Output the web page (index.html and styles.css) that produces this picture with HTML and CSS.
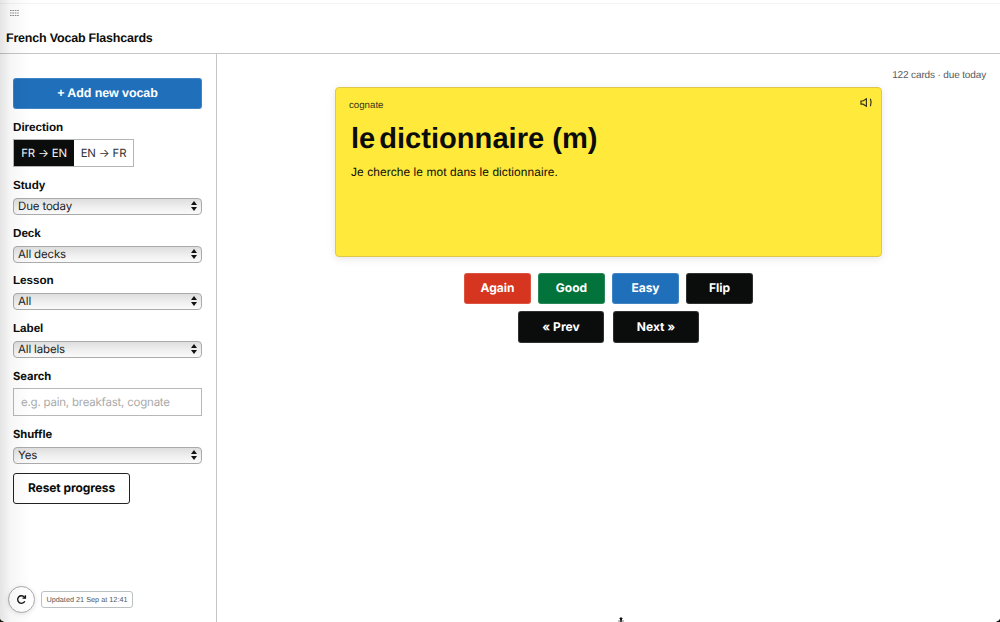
FILE: index.html
```html
<!DOCTYPE html>
<html lang="en">
<head>
<meta charset="utf-8">
<title>French Vocab Flashcards</title>
<link rel="stylesheet" href="styles.css">
</head>
<body>
<div class="app">
  <header class="header">
    <svg class="grip" width="9" height="7" viewBox="0 0 9 7" stroke="#8a8a8a" stroke-width="1" stroke-dasharray="1.6 .8"><path d="M0 .5h9M0 3h9M0 5.5h9"/></svg>
    <h1 class="title">French Vocab Flashcards</h1>
  </header>
  <div class="body">
    <aside class="sidebar">
      <button class="btn add">+ Add new vocab</button>
      <div class="field near">
        <span class="label">Direction</span>
        <div class="toggle"><button class="side on">FR → EN</button><button class="side">EN → FR</button></div>
      </div>
      <div class="field"><span class="label">Study</span><div class="select"><span>Due today</span><svg class="arrows" viewBox="0 0 6 10"><path d="M3 0l3 4H0zM3 10L0 6h6z"/></svg></div></div>
      <div class="field"><span class="label">Deck</span><div class="select"><span>All decks</span><svg class="arrows" viewBox="0 0 6 10"><path d="M3 0l3 4H0zM3 10L0 6h6z"/></svg></div></div>
      <div class="field"><span class="label">Lesson</span><div class="select"><span>All</span><svg class="arrows" viewBox="0 0 6 10"><path d="M3 0l3 4H0zM3 10L0 6h6z"/></svg></div></div>
      <div class="field"><span class="label">Label</span><div class="select"><span>All labels</span><svg class="arrows" viewBox="0 0 6 10"><path d="M3 0l3 4H0zM3 10L0 6h6z"/></svg></div></div>
      <div class="field near"><span class="label inter">Search</span><input class="search" placeholder="e.g. pain, breakfast, cognate"></div>
      <div class="field"><span class="label inter">Shuffle</span><div class="select"><span>Yes</span><svg class="arrows" viewBox="0 0 6 10"><path d="M3 0l3 4H0zM3 10L0 6h6z"/></svg></div></div>
      <button class="reset">Reset progress</button>
      <div class="status">
        <button class="refresh" aria-label="Refresh"><svg width="11" height="11" viewBox="0 0 11 11" fill="none" stroke="#111" stroke-width="1.35"><path d="M8.8 7.3A3.8 3.8 0 1 1 8.3 3L9.4 3.8"/><path d="M9.4 1.2v2.9H6.5" /></svg></button>
        <span class="updated">Updated 21 Sep at 12:41</span>
      </div>
    </aside>
    <main class="main">
      <div class="count">122 cards · due today</div>
      <section class="card">
        <div class="top"><span class="tag">cognate</span>
          <svg class="sound" width="13" height="10" viewBox="0 0 13 10" fill="none" stroke="#39351a" stroke-width="1.2"><path d="M1 3h2L6.4 .8v7.4L3 6.2H1z"/><path d="M10.4 .8q1.6 3.7 0 7.4"/></svg>
        </div>
        <h2 class="word"><span class="article">le</span><span class="noun">dictionnaire (m)</span></h2>
        <p class="example">Je cherche le mot dans le dictionnaire.</p>
      </section>
      <div class="actions">
        <button class="btn grade again">Again</button><button class="btn grade good">Good</button><button class="btn grade easy">Easy</button><button class="btn grade">Flip</button>
      </div>
      <div class="actions nav"><button class="btn step">« Prev</button><button class="btn step">Next »</button></div>
    </main>
  </div>
  <div class="edge"></div>
  <i class="corner left"></i><i class="corner right"></i>
  <svg class="pointer" width="6" height="5" viewBox="0 0 6 5"><path d="M3 0l2 2H4v3H2V2H1z" fill="#111"/><path d="M0 4h6" stroke="#777"/></svg>
</div>
</body>
</html>
```
FILE: styles.css
```css
* { box-sizing: border-box; }
body { margin: 0; background: #fff; color: #0b0d0c; font-family: "Liberation Sans", Arial, sans-serif; text-rendering: geometricPrecision; }
button, input { font: inherit; color: inherit; padding: 0; margin: 0; text-rendering: inherit; }
h1, h2, p { margin: 0; }
svg { display: block; }
.app { position: relative; width: 1000px; height: 622px; overflow: hidden; display: flex; flex-direction: column; }
.header { height: 54px; flex: none; border-top: 1px solid #fff; border-bottom: 1px solid #c3c5c6; padding: 9px 6px 0; background: linear-gradient(#f3f3f3, #f3f3f3) 0 2px / 100% 1px no-repeat; }
.grip { margin-left: 4px; }
.title { font-size: 12.5px; line-height: 16px; margin-top: 13px; letter-spacing: -.2px; }
.body { flex: 1; display: flex; min-height: 0; }
.sidebar { width: 217px; border-right: 1px solid #c3c5c6; padding: 24px 14px 0 13px; display: grid; grid-template-rows: 41px 58px 47.6px 47.8px 47.6px 48px 58px 46.8px 31px 1fr; align-items: start; }
.btn { border: 1px solid rgba(255,255,255,.15); border-radius: 3px; background: #0b0d0c; color: #fff; font-weight: 700; height: 31px; }
.add { background: #206fba; font-size: 12.5px; width: 189px; letter-spacing: -.1px; padding-bottom: 1px; }
.field { display: grid; grid-template-rows: 16px auto; row-gap: 5px; }
.near { row-gap: 4px; }
.label { font-size: 11.7px; font-weight: 700; line-height: 17px; letter-spacing: -.05px; }
.inter { font-family: "Inter", sans-serif; font-size: 11.2px; line-height: 16px; }
.toggle { display: flex; width: 121px; height: 28px; border: 1px solid #b5b5b5; }
.side { border: 0; background: #fff; flex: 1; font: 11.4px "Inter", sans-serif; color: #333; white-space: nowrap; letter-spacing: -.15px; }
.on { background: #0b0d0c; color: #f4f4f4; flex: 0 0 60px; }
.select { height: 17px; width: 189px; border: 1px solid #aaa; border-radius: 4px; background: linear-gradient(#dedede, #eee 50%, #fafafa); display: flex; align-items: center; justify-content: space-between; padding: 0 4px 1px; font: 11.5px "Inter", sans-serif; letter-spacing: -.16px; color: #222; }
.arrows { width: 6px; height: 10px; fill: #111; }
.search { width: 189px; height: 28px; border: 1px solid #b8b8b8; border-radius: 0; background: #fff; font: 11.5px "Inter", sans-serif; letter-spacing: -.22px; padding: 0 7px; outline: 0; }
.search::placeholder { color: #aaa; opacity: 1; }
.reset { width: 117px; height: 31px; border: 1px solid #222; border-radius: 3px; background: #fff; font: 700 12px "Inter", sans-serif; letter-spacing: -.08px; padding-bottom: 1px; }
.status { align-self: end; display: flex; align-items: center; gap: 6px; margin: 0 0 9px -5px; }
.refresh { width: 27px; height: 27px; border: 1px solid #aaa; border-radius: 50%; background: #fff; display: grid; place-items: center; box-shadow: 0 1px 5px rgba(0,0,0,.12); }
.updated { width: 92px; height: 17px; line-height: 15px; border: 1px solid #bbc0c2; border-radius: 3px; font-size: 7.3px; color: #555b60; text-align: center; white-space: nowrap; background: #fff; }
.main { flex: 1; padding: 13px 14px 0 0; display: flex; flex-direction: column; }
.count { text-align: right; color: #555b60; font-size: 10px; letter-spacing: -.14px; line-height: 18px; height: 20px; }
.card { width: 547px; height: 170px; margin-left: 118px; border: 1px solid #dcc94b; border-radius: 4px; background: #ffe93a; box-shadow: 0 2px 8px rgba(0,0,0,.1); padding: 10px 8px 0 13px; }
.top { display: flex; justify-content: space-between; height: 16px; }
.tag { font-size: 9.7px; line-height: 16px; color: #39351a; }
.word { font-size: 29.1px; line-height: 36px; margin: 7px 0 0 2px; white-space: nowrap; display: flex; gap: 4px; }
.example { font-size: 11.9px; letter-spacing: .1px; line-height: 16px; margin: 7px 0 0 2px; }
.actions { display: flex; gap: 7px; padding-left: 247px; margin-top: 16px; font: 700 12px "Inter", sans-serif; }
.actions .btn { padding-bottom: 1px; }
.actions .grade { width: 67px; padding-bottom: 2px; }
.again { background: #d6351f; }
.good { background: #03733c; }
.easy { background: #206fba; }
.nav { gap: 9px; padding-left: 301px; margin-top: 7px; }
.step { width: 86px; height: 32px; }
.edge { position: absolute; inset: 0 auto 0 0; width: 30px; background: linear-gradient(90deg, rgba(0,0,0,.105), rgba(0,0,0,.035) 35%, transparent); pointer-events: none; }
.corner { position: absolute; bottom: 0; width: 6px; height: 4px; }
.left { left: 0; background: radial-gradient(ellipse at 100% 0, transparent 65%, #17170f 75%); }
.right { right: 0; background: radial-gradient(ellipse at 0 0, transparent 65%, #111 75%); }
.pointer { position: absolute; bottom: 0; left: 618px; }
```
